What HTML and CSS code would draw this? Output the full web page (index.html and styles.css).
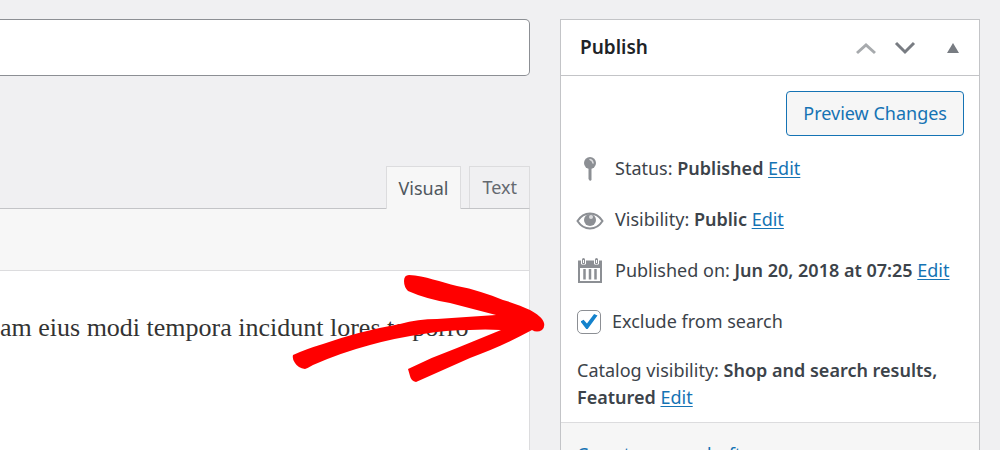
FILE: index.html
```html
<!DOCTYPE html>
<html lang="en">
<head>
<meta charset="utf-8">
<title>Edit product</title>
<link rel="stylesheet" href="styles.css">
</head>
<body>
<div class="screen">
  <main class="main">
    <input class="title-input" type="text" aria-label="Title">
    <div class="editor">
      <div class="tabs">
        <button class="tab tab-active" type="button">Visual</button>
        <button class="tab" type="button">Text</button>
      </div>
      <div class="pane">
        <div class="toolbar"></div>
        <p class="copy">am eius modi tempora incidunt lores te porro</p>
        <svg class="arrow" width="256" height="112" viewBox="0 0 256 112" aria-hidden="true">
          <path d="M119 3C135 4 151 10 167 14C183 17 199 22 213 28C224 31 233 35 240 38C247 42 253 46 254 51Q255 55 252 58Q247 61 242 58C222 69 202 78 180 86L126 110Q121 109 120 104L118 97Q142 85 167 76L211 58Q195 57 180 58Q156 58 133 62Q105 66 80 73Q50 81 23 93Q18 96 15 97Q8 96 5 91Q2 87 3 83Q16 77 33 72Q70 59 110 52Q128 47 147 47Q176 45 206 43L160 31Q136 27 118 19Q114 15 114 9Q114 3 119 3Z"/>
        </svg>
      </div>
    </div>
  </main>
  <aside class="box">
    <header class="box-head">
      <h2>Publish</h2>
      <div class="handles">
        <button type="button" aria-label="Move up" class="handle handle-muted"><svg width="22" height="14" viewBox="0 0 22 14"><path d="M2 12L11 4L20 12" fill="none" stroke="currentColor" stroke-width="3"/></svg></button>
        <button type="button" aria-label="Move down" class="handle"><svg width="22" height="14" viewBox="0 0 22 14"><path d="M2 2L11 11L20 2" fill="none" stroke="currentColor" stroke-width="3"/></svg></button>
        <button type="button" aria-label="Toggle panel" class="handle handle-toggle"><svg width="12" height="10" viewBox="0 0 12 10"><path d="M6 0L12 10H0Z" fill="currentColor"/></svg></button>
      </div>
    </header>
    <div class="box-body">
      <button class="preview" type="button">Preview Changes</button>
      <div class="rows">
        <div class="row">
          <svg class="icon" viewBox="0 0 28 28"><circle cx="14" cy="8" r="6" fill="currentColor"/><path d="M12.500 13H15.500V25L14 26L12.500 24Z" fill="currentColor"/><path d="M14 4.500Q16.500 5 17 8" fill="none" stroke="#dcdcde" stroke-width="1.500" stroke-linecap="round"/></svg>
          <span>Status: <b>Published</b> <a href="#status">Edit</a></span>
        </div>
        <div class="row">
          <svg class="icon" viewBox="0 0 28 28"><path d="M1.500 15C5 9.500 9 7.500 14 7.500S23 9.500 26.500 15C23 20.500 19 22.500 14 22.500S5 20.500 1.500 15Z" fill="none" stroke="currentColor" stroke-width="2"/><circle cx="14" cy="14" r="6" fill="currentColor"/><circle cx="15" cy="11" r="2" fill="#dcdcde"/></svg>
          <span>Visibility: <b>Public</b> <a href="#visibility">Edit</a></span>
        </div>
        <div class="row">
          <svg class="icon" viewBox="0 0 28 28"><path fill="currentColor" fill-rule="evenodd" d="M2 3.500H5V7Q7.500 9 10 7V3.500H18V7Q20.500 9 23 7V3.500H26V26H2ZM4 11V24H24V11Z"/><path d="M7.500 2.500V6M20.500 2.500V6" stroke="currentColor" stroke-width="3" stroke-linecap="round"/><path d="M7.500 3V6M20.500 3V6" stroke="#fff" stroke-width="1"/><path d="M8.500 12V22.500M14 12V22.500M19.500 12V22.500" stroke="currentColor" stroke-width="2.500"/></svg>
          <span>Published on: <b>Jun 20, 2018 at 07:25</b> <a href="#date">Edit</a></span>
        </div>
        <label class="check"><input type="checkbox" checked><span>Exclude from search</span></label>
      </div>
      <p class="catalog">Catalog visibility: <b>Shop and search results, Featured</b> <a href="#catalog">Edit</a></p>
    </div>
    <footer class="box-foot"><a href="#copy">Copy to a new draft</a></footer>
  </aside>
</div>
</body>
</html>
```
FILE: styles.css
```css
* { box-sizing: border-box; }
body {
  margin: 0;
  background: #f0f0f2;
  color: #3c434a;
  font: 18px/27px "Noto Sans", "Open Sans", sans-serif;
}
.screen {
  display: grid;
  grid-template-columns: minmax(0, 1fr) 420px;
  gap: 30px;
  height: 100vh;
  overflow: hidden;
  padding: 19px 20px 0 0;
}
button { font: inherit; color: inherit; cursor: pointer; }
b, h2 { font-weight: 600; }
a { color: #1573b4; text-underline-offset: 2px; }
.main { display: flex; flex-direction: column; gap: 90px; }
.title-input {
  width: 100%;
  height: 57px;
  padding: 0 12px;
  border: 1px solid #8c8f94;
  border-left: 0;
  border-radius: 0 5px 5px 0;
  background: #fff;
  font: inherit;
}
.editor { flex: 1; display: flex; flex-direction: column; }
.tabs { display: flex; justify-content: flex-end; gap: 8px; }
.tab {
  height: 42px;
  padding: 0 12px;
  border: 1px solid #dcdcde;
  border-bottom: 0;
  background: #f0f0f2;
  color: #646970;
}
.tab-active {
  height: 43px;
  margin-bottom: -1px;
  background: #f7f7f7;
  color: #50575e;
  position: relative;
  z-index: 1;
}
.pane {
  position: relative;
  flex: 1;
  border: 1px solid #dcdcde;
  border-top-color: #c3c4c7;
  border-left: 0;
  background: #fff;
}
.toolbar { height: 62px; border-bottom: 1px solid #dcdcde; background: #f7f7f7; }
.copy {
  margin: 40px 0 0;
  color: #333;
  font: 26px/34px "Liberation Serif", serif;
  white-space: nowrap;
}
.arrow { position: absolute; top: 63px; right: -17px; fill: #f00; }
.box {
  display: flex;
  flex-direction: column;
  border: 1px solid #c3c4c7;
  background: #fff;
}
.box-head {
  display: flex;
  align-items: center;
  justify-content: space-between;
  height: 56px;
  padding: 0 20px 0 19px;
  border-bottom: 1px solid #c3c4c7;
}
.box-head h2 { margin: 0; color: #1d2327; font-size: 19px; }
.handles { display: flex; align-items: center; gap: 17px; }
.handle { display: flex; padding: 0; border: 0; background: none; color: #787c82; }
.handle-muted { color: #a7aaad; }
.handle-toggle { margin-left: 14px; }
.box-body { display: flex; flex-direction: column; padding: 15px 15px 11px; }
.preview {
  align-self: flex-end;
  height: 45px;
  padding: 0 16px;
  border: 1px solid #1573b4;
  border-radius: 4px;
  background: #f6f6f6;
  color: #1573b4;
}
.rows { display: flex; flex-direction: column; gap: 24px; margin-top: 19px; }
.row { display: flex; align-items: center; gap: 11px; white-space: nowrap; }
.icon { flex: none; width: 28px; height: 28px; color: #8c8f94; }
.row, .check { height: 27px; }
.check { display: flex; align-items: center; gap: 11px; }
.check input {
  appearance: none;
  display: grid;
  place-items: center;
  width: 24px;
  height: 24px;
  margin: 0 0 0 1px;
  border: 1px solid #8c8f94;
  border-radius: 5px;
  background: #fff;
}
.check input:checked::before {
  content: "";
  width: 17px;
  height: 15px;
  background: #1482cc;
  clip-path: polygon(0 50%, 18% 38%, 38% 64%, 80% 0, 100% 10%, 42% 100%, 34% 100%);
}
.catalog { margin: 22px 0 0 1px; }
.box-foot { flex: 1; padding: 18px 16px; border-top: 1px solid #dcdcde; background: #f6f6f6; }
.box-foot a { text-decoration: none; }
```
